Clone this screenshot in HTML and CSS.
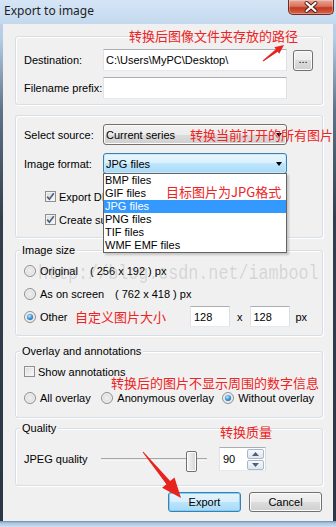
FILE: index.html
```html
<!DOCTYPE html>
<html lang="en">
<head>
    <meta charset="UTF-8">
    <title>Export to image</title>
    <link rel="stylesheet" href="styles.css">
</head>
<body>
    <div class="window">
        <div class="titlebar">
            <span class="title">Export to image</span>
            <div class="close-btn">
                <svg width="44" height="14" viewBox="0 0 44 14">
                    <path d="M17.5 3 L26.5 11 M26.5 3 L17.5 11" stroke="#4a1a12" stroke-width="4" stroke-linecap="round"/>
                    <path d="M17.5 3 L26.5 11 M26.5 3 L17.5 11" stroke="#fff" stroke-width="2.2" stroke-linecap="round"/>
                </svg>
            </div>
        </div>

        <div class="client">
            <div class="group g-dest">
                <div class="row">
                    <label class="field-label">Destination:</label>
                    <input class="textbox" type="text" value="C:\Users\MyPC\Desktop\">
                    <div class="btn btn-browse">...</div>
                </div>
                <div class="row">
                    <label class="field-label">Filename prefix:</label>
                    <input class="textbox" type="text" value="">
                </div>
            </div>

            <div class="group g-source">
                <div class="combo-row">
                    <label class="field-label">Select source:</label>
                    <div class="combo">
                        <span class="combo-text">Current series</span>
                        <span class="arrow"></span>
                    </div>
                </div>
                <div class="combo-row second">
                    <label class="field-label">Image format:</label>
                    <div class="combo combo-focus">
                        <span class="combo-text">JPG files</span>
                        <span class="arrow"></span>
                        <ul class="dropdown">
                            <li>BMP files</li>
                            <li>GIF files</li>
                            <li class="sel">JPG files</li>
                            <li>PNG files</li>
                            <li>TIF files</li>
                            <li>WMF EMF files</li>
                        </ul>
                    </div>
                </div>
                <div class="check-row indent first">
                    <span class="checkbox"><svg width="9" height="9" viewBox="0 0 9 9"><path d="M1.2 4.6 L3.4 7.2 L7.8 1.2" fill="none" stroke="#4b5f88" stroke-width="1.7"/></svg></span>
                    <span>Export DICOMDIR</span>
                </div>
                <div class="check-row indent">
                    <span class="checkbox"><svg width="9" height="9" viewBox="0 0 9 9"><path d="M1.2 4.6 L3.4 7.2 L7.8 1.2" fill="none" stroke="#4b5f88" stroke-width="1.7"/></svg></span>
                    <span>Create subfolders</span>
                </div>
            </div>

            <div class="group g-size">
                <span class="group-title">Image size</span>
                <div class="radio-row first">
                    <span class="radio"></span>
                    <span class="radio-label w-orig">Original</span>
                    <span>( 256 x 192 ) px</span>
                </div>
                <div class="radio-row">
                    <span class="radio"></span>
                    <span class="radio-label w-screen">As on screen</span>
                    <span>( 762 x 418 ) px</span>
                </div>
                <div class="radio-row">
                    <span class="radio on"></span>
                    <span class="radio-label w-other">Other</span>
                    <input class="textbox small" type="text" value="128">
                    <span class="times">x</span>
                    <input class="textbox small" type="text" value="128">
                    <span class="unit">px</span>
                </div>
            </div>

            <div class="group g-overlay">
                <span class="group-title">Overlay and annotations</span>
                <div class="check-row first">
                    <span class="checkbox"></span>
                    <span>Show annotations</span>
                </div>
                <div class="radio-row overlay-row">
                    <span class="opt opt-all"><span class="radio"></span>All overlay</span>
                    <span class="opt opt-anon"><span class="radio"></span>Anonymous overlay</span>
                    <span class="opt"><span class="radio on"></span>Without overlay</span>
                </div>
            </div>

            <div class="group g-quality">
                <span class="group-title">Quality</span>
                <div class="quality-row">
                    <span class="quality-label">JPEG quality</span>
                    <div class="slider"><span class="thumb"></span></div>
                    <div class="spin">
                        <span class="spin-val">90</span>
                        <div class="spin-btns">
                            <span class="spin-btn"><svg width="7" height="4" viewBox="0 0 7 4"><path d="M0 4 L3.5 0 L7 4 Z" fill="#4d5f7d"/></svg></span>
                            <span class="spin-btn"><svg width="7" height="4" viewBox="0 0 7 4"><path d="M0 0 L3.5 4 L7 0 Z" fill="#4d5f7d"/></svg></span>
                        </div>
                    </div>
                </div>
            </div>

            <div class="buttons">
                <div class="btn btn-default">Export</div>
                <div class="btn">Cancel</div>
            </div>
        </div>

        <div class="frame-bottom"></div>

        <!-- screenshot annotations -->
        <div class="watermark">http://blog.csdn.net/iambool</div>
        <div class="note n-dest">转换后图像文件夹存放的路径</div>
        <div class="note n-source">转换当前打开的所有图片</div>
        <div class="note n-format">目标图片为JPG格式</div>
        <div class="note n-size">自定义图片大小</div>
        <div class="note n-overlay">转换后的图片不显示周围的数字信息</div>
        <div class="note n-quality">转换质量</div>
        <svg class="arrows" width="336" height="527" viewBox="0 0 336 527">
            <polygon points="263.3,61.4 277.7,51.7 279.2,53.7 284,45 274.4,47.3 275.9,49.3 262.7,60.6" fill="#e8221d"/>
            <polygon points="143.4,451.7 170.2,481 174.5,477.5 181,498 162.1,487.7 166.4,484.2 142.6,452.3" fill="#e8221d"/>
        </svg>
    </div>
</body>
</html>
```

FILE: styles.css
```css
* {
    box-sizing: border-box;
}

body {
    margin: 0;
    background: #2d3846;
    font-family: "Liberation Sans", Arial, sans-serif;
    font-size: 11px;
    color: #000;
}

.window {
    position: relative;
    width: 336px;
    height: 527px;
    display: flex;
    flex-direction: column;
    overflow: hidden;
    white-space: nowrap;
    background: linear-gradient(to bottom, #c6daef 0, #b3cbe4 40px, #5f7287 110px, #333f4d 220px, #2c3745 100%);
}

/* title bar */
.titlebar {
    height: 24px;
    flex-shrink: 0;
    display: flex;
    align-items: flex-start;
    background: linear-gradient(#d5e5f6, #c4d9ee);
}

.title {
    padding: 3px 0 0 4px;
    font-family: "Noto Sans", sans-serif;
    font-size: 12px;
    line-height: 15px;
    color: #1e1e1e;
}

.close-btn {
    margin-left: auto;
    margin-right: 2px;
    width: 46px;
    height: 15px;
    border: 1px solid #6e2c21;
    border-top: none;
    border-radius: 0 0 5px 5px;
    background: linear-gradient(#e9a595 0, #d9735d 45%, #c2391e 55%, #d5644c 100%);
    box-shadow: inset 0 0 0 1px rgba(255,255,255,0.3);
    display: flex;
    align-items: center;
    justify-content: center;
}

/* client area */
.client {
    flex: 1;
    margin: 0 3px;
    background: #f0f0f0;
    padding: 12px 10px 0 12px;
    display: flex;
    flex-direction: column;
}

.frame-bottom {
    height: 6px;
    flex-shrink: 0;
    background: linear-gradient(#6f89a8 0, #a9c3df 2px, #cddff2 100%);
}

.group {
    border: 1px solid #d5dfe5;
    border-radius: 3px;
    padding: 0 8px;
    display: flex;
    flex-direction: column;
    box-shadow: inset 1px 1px 0 #fff, 1px 1px 0 #fff;
}

.group-title {
    align-self: flex-start;
    margin: -8px 0 0 -4px;
    padding: 0 2px;
    background: #f0f0f0;
    line-height: 14px;
}

.g-dest { padding-top: 12px; padding-bottom: 5px; gap: 6px; }
.g-source { margin-top: 10px; padding-top: 8px; padding-bottom: 9px; }
.g-size { margin-top: 12px; padding-bottom: 8px; }
.g-overlay { margin-top: 15px; padding-bottom: 9px; }
.g-quality { margin-top: 10px; padding-bottom: 14px; }

.row, .combo-row {
    display: flex;
    align-items: center;
    height: 22px;
}

.combo-row { height: 21px; }
.combo-row.second { margin-top: 8px; }

.field-label {
    width: 79px;
    flex-shrink: 0;
    line-height: 14px;
}

.textbox {
    width: 184px;
    height: 22px;
    margin: 0;
    padding: 0 2px;
    border: 1px solid;
    border-color: #abadb3 #dbdfe6 #e3e9ef #e2e3ea;
    border-radius: 1px;
    background: #fff;
    font: inherit;
    color: #000;
    outline: none;
}

.textbox.small {
    width: 40px;
    height: 21px;
    padding-left: 3px;
}

.btn {
    height: 20px;
    width: 73px;
    border: 1px solid #707070;
    border-radius: 3px;
    background: linear-gradient(#f2f2f2 0%, #ebebeb 50%, #dddddd 50%, #cfcfcf 100%);
    box-shadow: inset 0 0 0 1px #fbfbfb;
    display: flex;
    align-items: center;
    justify-content: center;
    line-height: 14px;
}

.btn-browse {
    width: 20px;
    height: 21px;
    margin-left: 6px;
    padding-bottom: 3px;
}

.btn-default {
    border-color: #3c7fb1;
    background: linear-gradient(#e5f4fc 0%, #d7effc 50%, #bce5fc 50%, #a7d9f5 100%);
    box-shadow: inset 0 0 0 1px #7fd0f8;
}

/* combo boxes */
.combo {
    position: relative;
    width: 184px;
    height: 21px;
    border: 1px solid #707070;
    border-radius: 3px;
    background: linear-gradient(#f2f2f2 0%, #ebebeb 50%, #dddddd 50%, #cfcfcf 100%);
    box-shadow: inset 0 0 0 1px #fbfbfb;
    display: flex;
    align-items: center;
    padding: 0 4px 0 2px;
}

.combo-focus {
    border-color: #3c7fb1;
    background: linear-gradient(#eaf6fd 0%, #d9f0fc 50%, #bee6fd 50%, #a7d9f5 100%);
    box-shadow: inset 0 0 0 1px #c8ebfb;
}

.combo-text { line-height: 14px; }

.arrow {
    margin-left: auto;
    margin-top: 1px;
    width: 0;
    height: 0;
    border-left: 3.5px solid transparent;
    border-right: 3.5px solid transparent;
    border-top: 4px solid #000;
}

.dropdown {
    position: absolute;
    left: -1px;
    top: 100%;
    width: 184px;
    margin: 0;
    padding: 0;
    list-style: none;
    border: 1px solid #646464;
    background: #fff;
    box-shadow: 2px 2px 2px rgba(0,0,0,0.18);
    z-index: 5;
}

.dropdown li {
    height: 13px;
    line-height: 13px;
    padding-left: 1px;
}

.dropdown li.sel {
    background: #3399ff;
    color: #fff;
}

/* check boxes and radios */
.check-row {
    display: flex;
    align-items: center;
    gap: 3px;
    height: 17px;
    margin-top: 6px;
    line-height: 14px;
}

.check-row.indent { padding-left: 21px; }
.g-source .check-row.first { margin-top: 14px; }
.g-overlay .check-row.first { margin-top: 5px; }

.checkbox {
    width: 11px;
    height: 11px;
    flex-shrink: 0;
    border: 1px solid #8e8f8f;
    background: linear-gradient(135deg, #d9d9d9, #fbfbfb);
    box-shadow: inset 0 0 0 1px #f2f2f2;
    display: flex;
    align-items: center;
    justify-content: center;
}

.radio-row {
    display: flex;
    align-items: center;
    height: 21px;
    margin-top: 2px;
    line-height: 14px;
}

.radio-row.first { margin-top: 3px; }
.overlay-row { margin-top: 7px; }

.radio {
    width: 12px;
    height: 12px;
    flex-shrink: 0;
    margin-right: 4px;
    border: 1px solid #8e8f8f;
    border-radius: 50%;
    background: radial-gradient(circle at 50% 50%, #f0f0f0 0, #d4d4d4 100%);
    box-shadow: inset 0 0 0 1px #f6f6f6;
    display: flex;
    align-items: center;
    justify-content: center;
}

.radio.on::after {
    content: "";
    width: 6px;
    height: 6px;
    border-radius: 50%;
    background: radial-gradient(circle at 40% 35%, #bfeaff 0, #2e8ad2 55%, #0c4a86 100%);
}

.radio-label.w-orig { width: 50px; }
.radio-label.w-screen { width: 75px; }
.radio-label.w-other { width: 150px; }

.times { margin: 0 7px 0 7px; }
.unit { margin-left: 6px; }

.opt {
    display: flex;
    align-items: center;
}

.opt-all { width: 78px; }
.opt-anon { width: 122px; }

/* quality */
.quality-row {
    display: flex;
    align-items: center;
    height: 24px;
    margin-top: 12px;
}

.quality-label { width: 77px; line-height: 14px; }

.slider {
    width: 106px;
    height: 24px;
    display: flex;
    align-items: center;
    background: linear-gradient(to bottom, transparent 11px, #a7a7a7 11px, #a7a7a7 12px, #e6e6e6 12px, #ffffff 14px, transparent 14px);
}

.thumb {
    margin: 4px 0 0 85px;
    width: 11px;
    height: 21px;
    border: 1px solid #707070;
    border-radius: 2px;
    background: linear-gradient(to right, #f4f4f4, #d6d6d6);
    box-shadow: inset 0 0 0 1px #fff;
}

.spin {
    width: 47px;
    height: 24px;
    margin-left: 12px;
    border: 1px solid;
    border-color: #abadb3 #dbdfe6 #e3e9ef #e2e3ea;
    background: #fff;
    display: flex;
    align-items: center;
    padding: 0 1px 0 3px;
}

.spin-val { line-height: 14px; }

.spin-btns {
    margin-left: auto;
    display: flex;
    flex-direction: column;
    gap: 1px;
}

.spin-btn {
    width: 17px;
    height: 10px;
    border: 1px solid #a9b7c9;
    border-radius: 2px;
    background: linear-gradient(#f6f8fb, #dfe6ee);
    display: flex;
    align-items: center;
    justify-content: center;
}

/* dialog buttons */
.buttons {
    display: flex;
    justify-content: flex-end;
    gap: 8px;
    margin: 6px 1px 0 0;
}

/* annotations painted over the screenshot */
.watermark {
    position: absolute;
    left: 38px;
    top: 264px;
    font-family: "Liberation Mono", monospace;
    font-size: 20px;
    line-height: 20px;
    color: rgba(100,100,100,0.2);
    transform: scaleX(0.835);
    transform-origin: left center;
    z-index: 6;
}

.note {
    position: absolute;
    font-family: "Noto Sans CJK SC", sans-serif;
    font-size: 13px;
    line-height: 13px;
    color: #ee2323;
    z-index: 8;
}

.n-dest { left: 129px; top: 29px; }
.n-source { left: 190px; top: 128px; }
.n-format { left: 166px; top: 185px; }
.n-size { left: 75px; top: 310px; }
.n-overlay { left: 111px; top: 376px; }
.n-quality { left: 220px; top: 425px; }

.arrows {
    position: absolute;
    left: 0;
    top: 0;
    z-index: 9;
    pointer-events: none;
}
```
